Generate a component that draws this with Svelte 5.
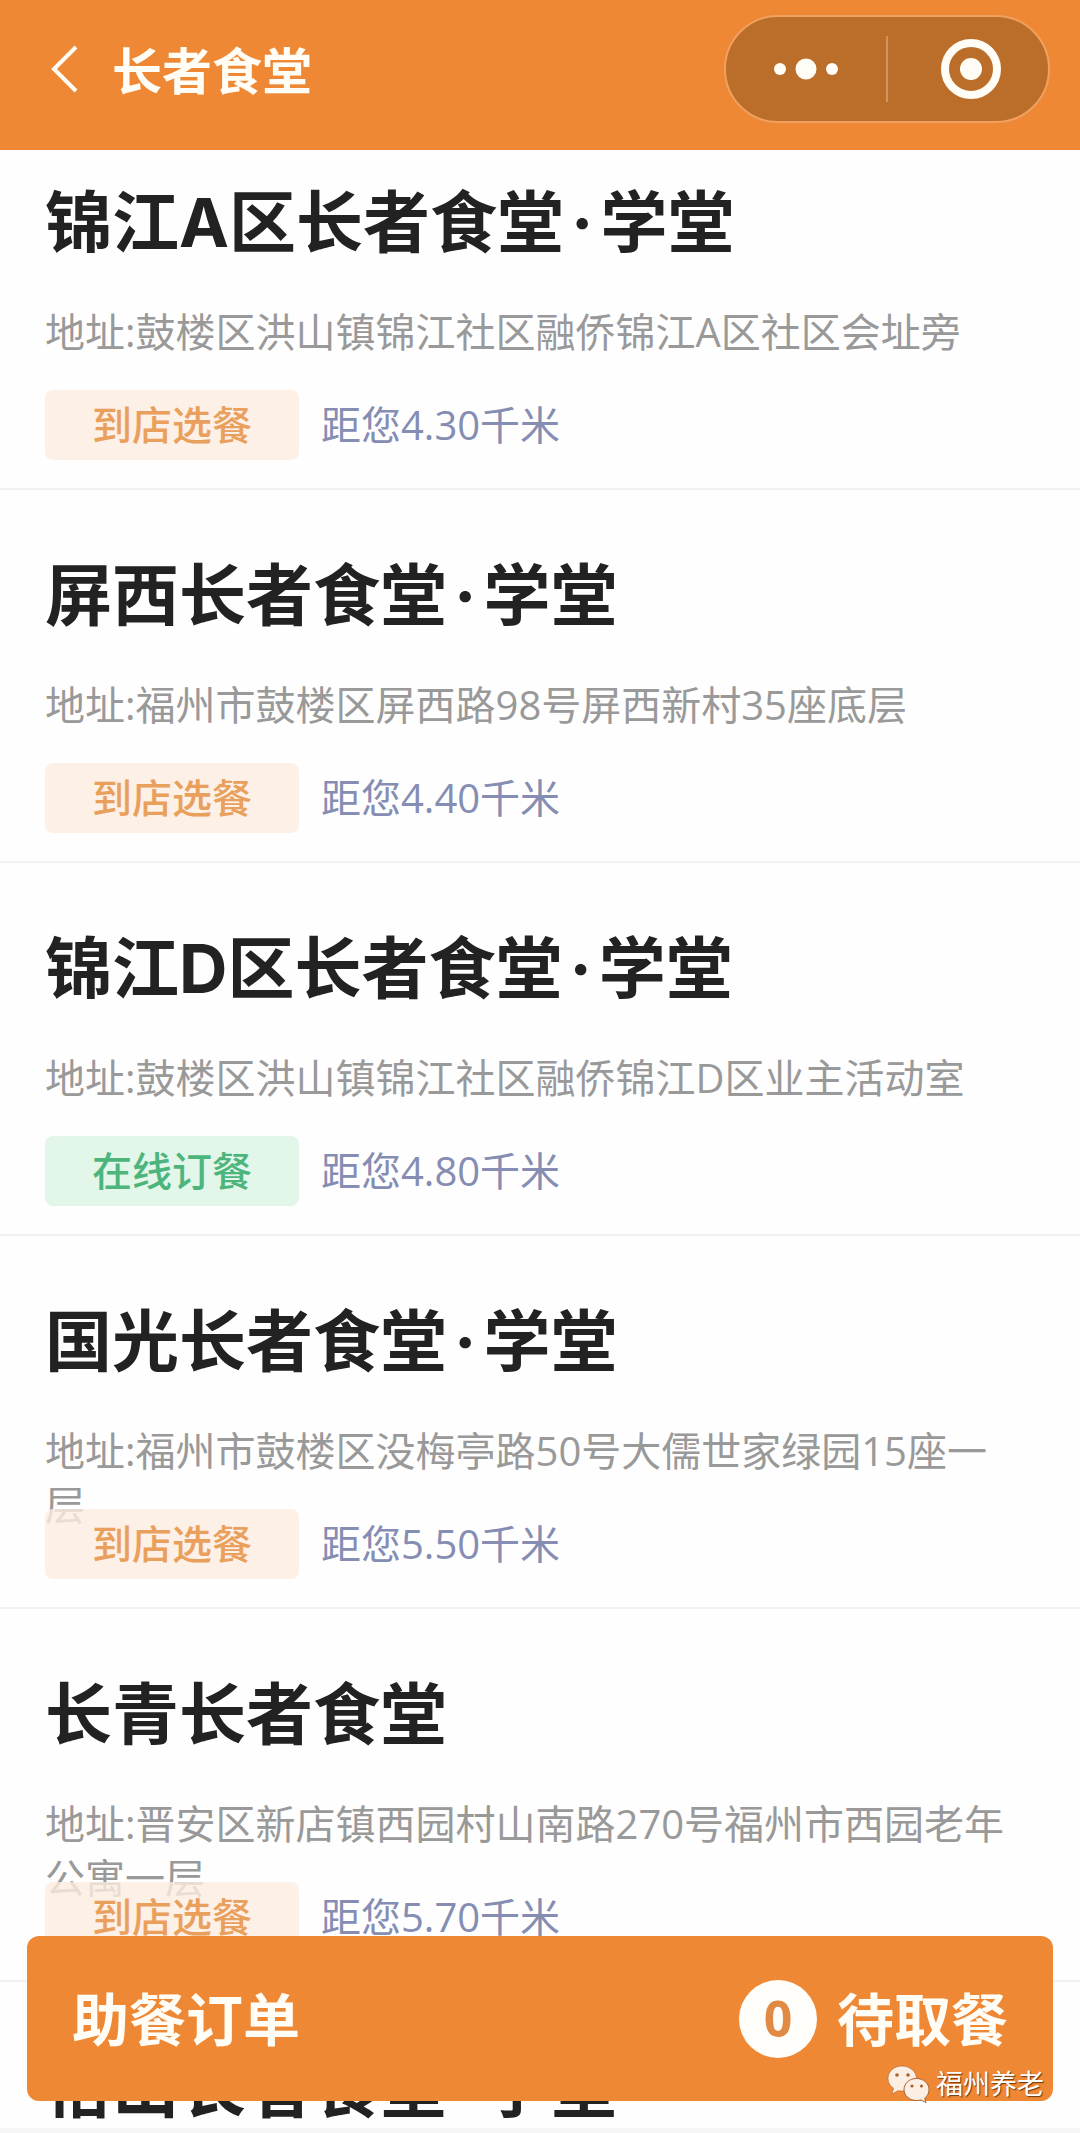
<script lang="ts">
	type Mode = 'store' | 'online';

	interface Canteen {
		name: string;
		school?: boolean;
		address?: string;
		mode?: Mode;
		distance?: string;
	}

	const modeLabels: Record<Mode, string> = {
		store: '到店选餐',
		online: '在线订餐'
	};

	const canteens: Canteen[] = [
		{ name: '锦江A区长者食堂', school: true, address: '鼓楼区洪山镇锦江社区融侨锦江A区社区会址旁', mode: 'store', distance: '4.30' },
		{ name: '屏西长者食堂', school: true, address: '福州市鼓楼区屏西路98号屏西新村35座底层', mode: 'store', distance: '4.40' },
		{ name: '锦江D区长者食堂', school: true, address: '鼓楼区洪山镇锦江社区融侨锦江D区业主活动室', mode: 'online', distance: '4.80' },
		{ name: '国光长者食堂', school: true, address: '福州市鼓楼区没梅亭路50号大儒世家绿园15座一层', mode: 'store', distance: '5.50' },
		{ name: '长青长者食堂', address: '晋安区新店镇西园村山南路270号福州市西园老年公寓一层', mode: 'store', distance: '5.70' },
		{ name: '怡山长者食堂', school: true }
	];

	let pending = $state(0);
</script>

<div class="page">
	<header class="navbar">
		<button class="back" aria-label="返回">
			<svg width="28" height="50" viewBox="0 0 28 50" aria-hidden="true">
				<path d="M26 3 4 25l22 22" fill="none" stroke="currentColor" stroke-width="4" />
			</svg>
		</button>
		<h1>长者食堂</h1>
		<div class="capsule">
			<button aria-label="更多">
				<svg width="66" height="24" viewBox="0 0 66 24" fill="currentColor" aria-hidden="true">
					<circle cx="7" cy="12" r="6" />
					<circle cx="33" cy="12" r="10.5" />
					<circle cx="59" cy="12" r="6" />
				</svg>
			</button>
			<span class="divider"></span>
			<button class="close" aria-label="关闭">
				<svg width="62" height="62" viewBox="0 0 62 62" aria-hidden="true">
					<circle cx="31" cy="31" r="26" fill="none" stroke="currentColor" stroke-width="8" />
					<circle cx="31" cy="31" r="11" fill="currentColor" />
				</svg>
			</button>
		</div>
	</header>

	<main class="list">
		{#each canteens as canteen (canteen.name)}
			<article class="canteen">
				<h2>{canteen.name}{#if canteen.school}<span class="dot">·</span>学堂{/if}</h2>
				{#if canteen.address}
					<p class="address">地址:{canteen.address}</p>
				{/if}
				{#if canteen.mode}
					<div class="meta">
						<button class="tag" data-mode={canteen.mode}>{modeLabels[canteen.mode]}</button>
						<span class="distance">距您{canteen.distance}千米</span>
					</div>
				{/if}
			</article>
		{/each}
	</main>

	<button class="orders">
		<span class="label">助餐订单</span>
		<span class="pending">
			<span class="count">{pending}</span>
			<span class="label">待取餐</span>
		</span>
	</button>

	<div class="account">
		<svg width="43" height="38" viewBox="0 0 43 38" aria-hidden="true">
			<path
				class="bubble"
				d="M15 1C7 1 1 6.500 1 13.500c0 4 2 7.500 5.500 9.800L5 29l6-3.300c1.300.3 2.600.4 4 .4 8 0 14.500-5.500 14.500-12.500S23 1 15 1z"
			/>
			<path
				class="bubble front"
				d="M29.500 13.500C22.500 13.500 17 18.300 17 24.500s5.500 11 12.500 11c1.500 0 3-.2 4.300-.6L39 37.500l-1.300-4.300c2.700-2 4.300-5.200 4.300-8.700 0-6.200-5.500-11-12.500-11z"
			/>
			<g class="eyes">
				<circle cx="10" cy="10" r="1.800" />
				<circle cx="21" cy="10" r="1.800" />
				<circle cx="25" cy="21" r="1.600" />
				<circle cx="34.500" cy="21" r="1.600" />
			</g>
		</svg>
		<span>福州养老</span>
	</div>

	<div class="safe-area"></div>
</div>

<style>
	:global(body) {
		margin: 0;
	}

	.page {
		position: relative;
		display: flex;
		flex-direction: column;
		height: 100vh;
		overflow: hidden;
		background: #fefefe;
		color: #222;
		font-family: 'Open Sans', 'Noto Sans CJK SC', sans-serif;
	}

	button {
		margin: 0;
		padding: 0;
		border: 0;
		background: none;
		color: inherit;
		font: inherit;
		cursor: pointer;
	}

	svg {
		display: block;
	}

	h1,
	h2,
	p {
		margin: 0;
	}

	.navbar {
		z-index: 1;
		display: flex;
		flex: none;
		align-items: center;
		box-sizing: border-box;
		height: 150px;
		padding: 0 30px 12px 50px;
		background: #ef8834;
		color: #fffdf5;
	}

	h1 {
		flex: 1;
		margin-left: 34px;
		padding-top: 4px;
		font-size: 50px;
		font-weight: 700;
		line-height: 72px;
	}

	.capsule {
		display: flex;
		align-items: center;
		box-sizing: border-box;
		width: 326px;
		height: 108px;
		border: 2px solid #f0a05f;
		border-radius: 54px;
		background: #bb6e2a;
	}

	.capsule button {
		display: flex;
		align-items: center;
		justify-content: center;
		width: 160px;
		height: 100%;
	}

	.capsule .close {
		padding-left: 6px;
	}

	.divider {
		width: 2px;
		height: 66px;
		background: #d3935c;
	}

	/* the list is scrolled slightly, so the first row starts under the navbar */
	.list {
		flex: 1;
		min-height: 0;
		margin-top: -33px;
		overflow: hidden;
	}

	.canteen {
		box-sizing: border-box;
		height: 373px;
		padding: 61px 45px 0;
		border-bottom: 2px solid #f1f1f1;
	}

	h2 {
		font-family: Inter, 'Noto Sans CJK SC', sans-serif;
		font-size: 67px;
		font-weight: 700;
		line-height: 90px;
	}

	.dot {
		margin: 0 7px;
	}

	.address {
		height: 54px;
		margin-top: 37px;
		padding-right: 12px;
		color: #999;
		font-size: 40px;
		line-height: 54px;
	}

	.meta {
		position: relative;
		display: flex;
		gap: 22px;
		margin-top: 31px;
		font-size: 40px;
		line-height: 70px;
	}

	.tag {
		width: 254px;
		height: 70px;
		border-radius: 8px;
		font-weight: 500;
	}

	.tag[data-mode='store'] {
		background: rgba(252, 236, 224, 0.8);
		color: #e9a05c;
	}

	.tag[data-mode='online'] {
		background: #e2f6ea;
		color: #4db57c;
	}

	.distance {
		color: #858db3;
	}

	.orders {
		position: absolute;
		right: 27px;
		bottom: 32px;
		left: 27px;
		z-index: 1;
		display: flex;
		align-items: center;
		justify-content: space-between;
		height: 165px;
		padding: 0 45px;
		border-radius: 12px;
		background: #ef8834;
		color: #fffdf5;
		font-size: 57px;
		font-weight: 700;
	}

	.label {
		padding-bottom: 4px;
	}

	.pending {
		display: flex;
		align-items: center;
		gap: 20px;
	}

	.count {
		width: 78px;
		height: 78px;
		border-radius: 50%;
		background: #fffefa;
		color: #e08a45;
		font-size: 50px;
		line-height: 76px;
	}

	.account {
		position: absolute;
		right: 36px;
		bottom: 30px;
		z-index: 2;
		display: flex;
		align-items: center;
		gap: 6px;
		color: #fff;
		font-size: 27px;
		line-height: 38px;
		text-shadow: 1px 1px 1px #6b3a12;
		pointer-events: none;
	}

	.bubble {
		fill: #fdeee4;
		stroke: #a8632d;
		stroke-width: 0.6;
	}

	.bubble.front {
		stroke-width: 1;
	}

	.eyes {
		fill: #a8632d;
	}

	.safe-area {
		z-index: 1;
		flex: none;
		height: 5px;
		background: #f5f5f5;
	}
</style>
